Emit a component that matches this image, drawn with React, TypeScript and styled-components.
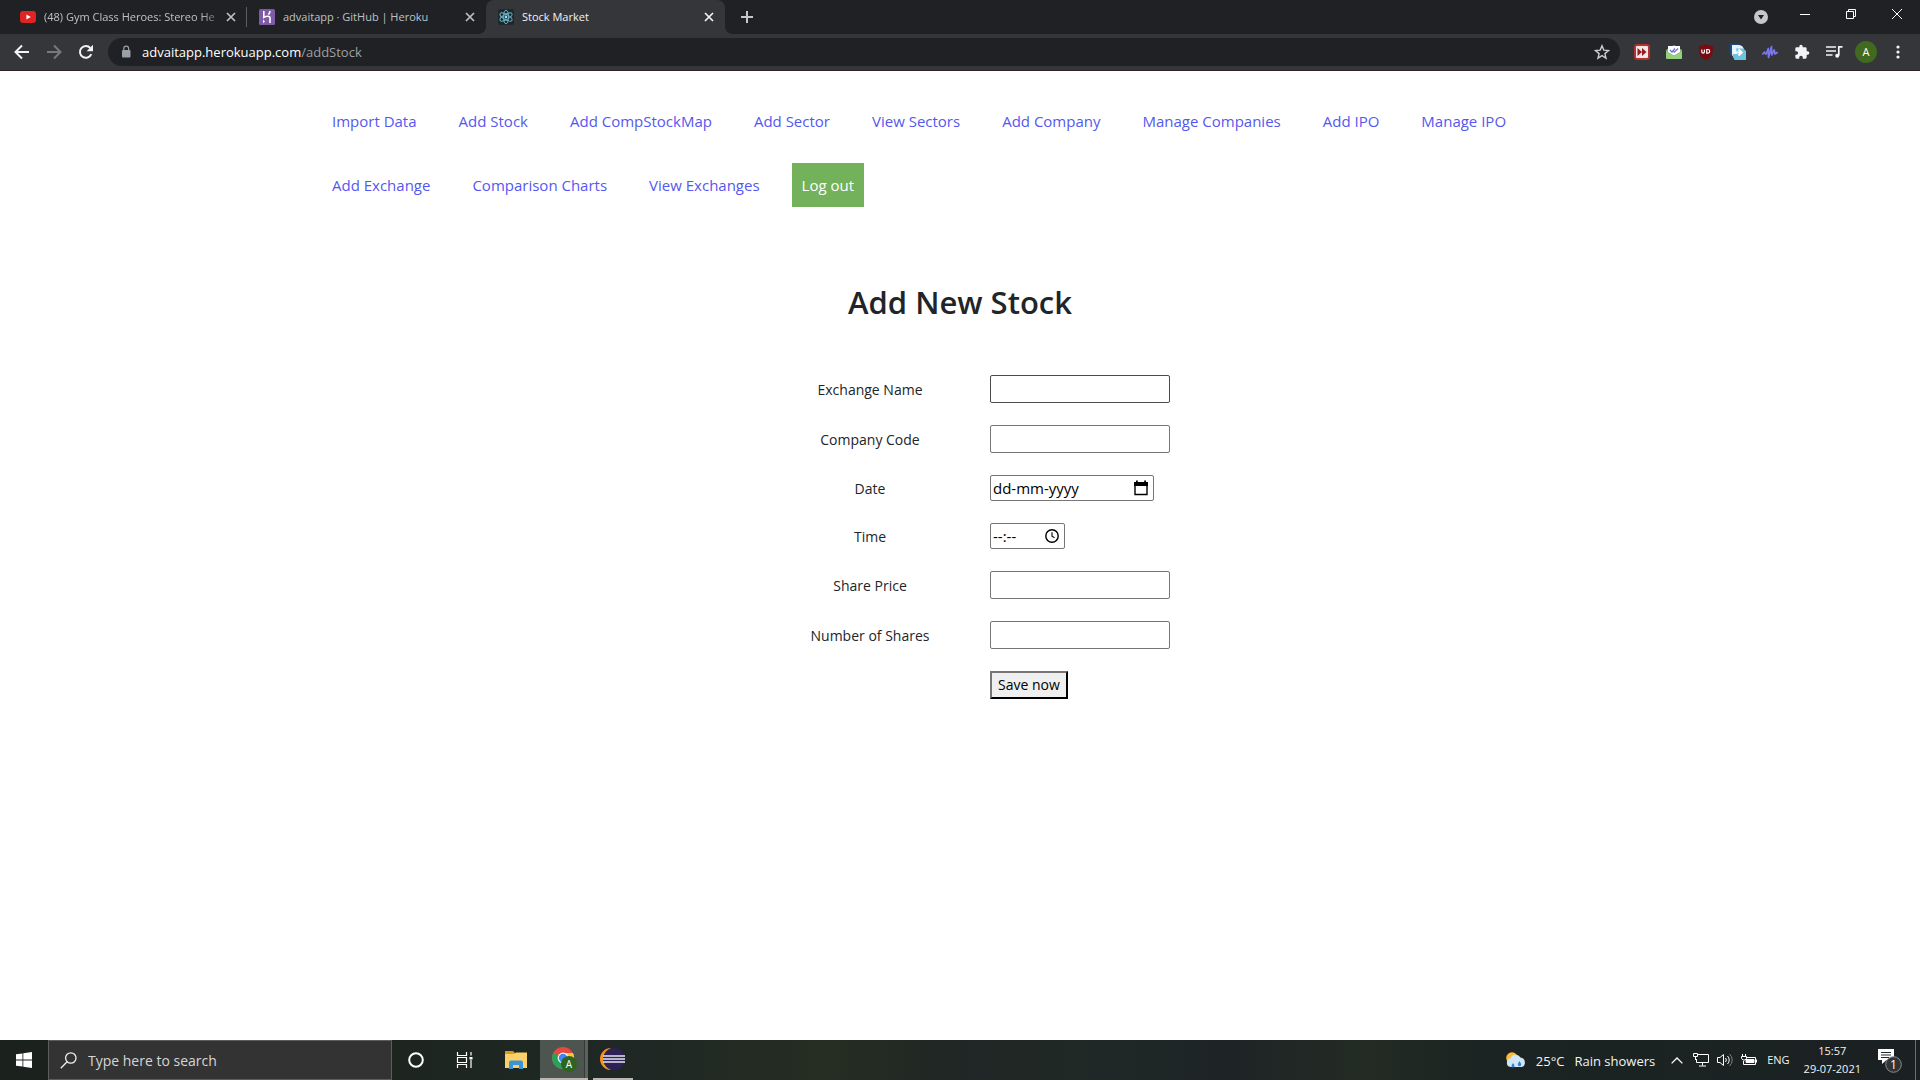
import React from 'react';
import styled, { createGlobalStyle, css } from 'styled-components';

const GlobalStyle = createGlobalStyle`
  *, *::before, *::after { box-sizing: border-box; }
  body { margin: 0; background: #fff; font-family: "Open Sans", "Noto Sans", sans-serif; }
  button, input { font: inherit; }
  a { text-decoration: none; }
`;

const Screen = styled.div`
  display: flex;
  flex-direction: column;
  min-height: 100vh;
`;

/* ---------- browser frame ---------- */

const BrowserFrame = styled.header`
  background: #202124;
  border-bottom: 1px solid #29222a;
`;

const TabStrip = styled.div`
  display: flex;
  align-items: stretch;
  height: 34px;
  padding-left: 8px;
`;

const Tab = styled.div<{ $active?: boolean; $divider?: boolean }>`
  display: flex;
  align-items: center;
  position: relative;
  flex: 0 1 239px;
  min-width: 0;
  height: 34px;
  padding: 0 7px 0 12px;
  color: ${(p) => (p.$active ? '#f1f3f4' : '#bdc1c6')};
  ${(p) =>
    p.$divider &&
    css`
      background: linear-gradient(#5b5d61, #5b5d61) right center / 1px 20px no-repeat;
    `}
  ${(p) =>
    p.$active &&
    css`
      background: #35363a;
      border-radius: 8px 8px 0 0;
      &::before,
      &::after {
        content: '';
        position: absolute;
        bottom: 0;
        width: 8px;
        height: 8px;
      }
      &::before {
        right: 100%;
        background: radial-gradient(circle at 0 0, #0000 8px, #35363a 8px);
      }
      &::after {
        left: 100%;
        background: radial-gradient(circle at 100% 0, #0000 8px, #35363a 8px);
      }
    `}
`;

const TabLabel = styled.button<{ $fade?: boolean }>`
  display: flex;
  align-items: center;
  gap: 8px;
  flex: 1;
  min-width: 0;
  padding: 0;
  border: 0;
  background: none;
  color: inherit;
  font-size: 11px;
  line-height: 16px;
  text-align: left;
  svg { flex: none; }
  span {
    flex: 1;
    overflow: hidden;
    white-space: nowrap;
    ${(p) => p.$fade && 'mask-image: linear-gradient(90deg, #000 88%, #0003);'}
  }
`;

const GlyphButton = styled.button<{ $w: number; $h: number; $color?: string }>`
  display: grid;
  place-items: center;
  flex: none;
  width: ${(p) => p.$w}px;
  height: ${(p) => p.$h}px;
  padding: 0;
  border: 0;
  background: none;
  color: ${(p) => p.$color || '#f1f3f4'};
`;

const WindowControls = styled.div`
  display: flex;
  align-items: flex-start;
  margin-left: auto;
`;

const Toolbar = styled.div`
  display: flex;
  align-items: center;
  height: 36px;
  padding: 0 6px;
  background: #35363a;
`;

const Omnibox = styled.form`
  display: flex;
  align-items: center;
  flex: 1;
  min-width: 0;
  height: 28px;
  margin: 0 6px;
  padding: 0 2px 0 11px;
  border-radius: 14px;
  background: #202124;
  font-size: 13px;
  line-height: 18px;
`;

const Host = styled.label`
  margin-left: 9px;
  color: #fff;
`;

const PathInput = styled.input`
  flex: 1;
  min-width: 0;
  padding: 0;
  border: 0;
  outline: 0;
  background: none;
  color: #9aa0a6;
`;

const Avatar = styled.span`
  display: grid;
  place-items: center;
  width: 22px;
  height: 22px;
  border-radius: 50%;
  background: #41691f;
  color: #fff;
  font-size: 11px;
  line-height: 16px;
`;

/* ---------- page ---------- */

const Page = styled.main`
  display: flex;
  flex: 1;
  flex-direction: column;
  align-items: center;
  background: #fff;
`;

const Nav = styled.nav`
  display: flex;
  flex-wrap: wrap;
  gap: 20px 22px;
  width: 100%;
  max-width: 1276px;
  margin-top: 28px;
`;

const NavLink = styled.a<{ $filled?: boolean }>`
  padding: 10px;
  background: ${(p) => (p.$filled ? '#73b15a' : 'transparent')};
  color: ${(p) => (p.$filled ? '#fff' : '#5558f0')};
  font-size: 15px;
  line-height: 24px;
`;

const Title = styled.h2`
  margin: 76px 0 54px;
  color: #212529;
  font-size: 31px;
  font-weight: 600;
  line-height: 38px;
`;

const StockForm = styled.form`
  display: grid;
  grid-template-columns: 240px 180px;
  row-gap: 22px;
  align-items: center;
  justify-items: start;
  color: #212529;
  font-size: 14px;
  line-height: 22px;
`;

const FieldLabel = styled.label`
  justify-self: center;
  padding-top: 2px;
`;

const fieldBox = css`
  border: 1px solid #767676;
  border-radius: 2px;
  background: #fff;
  color: #000;
`;

const TextField = styled.input<{ $hovered?: boolean }>`
  ${fieldBox}
  width: 100%;
  height: 28px;
  padding: 1px 2px;
  ${(p) => p.$hovered && 'border-color: #4c4c4c;'}
`;

const PickerBox = styled.div<{ $w: number }>`
  ${fieldBox}
  display: flex;
  align-items: center;
  width: ${(p) => p.$w}px;
  height: 26px;
  padding: 0 4px 0 2px;
  input {
    flex: 1;
    min-width: 0;
    padding: 0;
    border: 0;
    outline: 0;
    background: none;
    font-size: 15px;
  }
  input::placeholder { color: #000; opacity: 1; }
`;

const SaveButton = styled.button`
  grid-column: 2;
  height: 28px;
  padding: 0 6px;
  border: 2px outset #767676;
  border-color: #767676 #212121 #212121 #767676;
  background: #efefef;
  color: #000;
`;

/* ---------- taskbar ---------- */

const Taskbar = styled.footer`
  display: flex;
  align-items: stretch;
  height: 40px;
  background: linear-gradient(90deg, #1b211d 0%, #1f2824 34%, #262d22 43%, #202625 50%, #202926 56%, #1e2426 64%, #232b24 71%, #1b2422 77%, #1b2123 100%);
  color: #f3f3f3;
`;

const SearchBox = styled.label`
  display: flex;
  align-items: center;
  gap: 11px;
  width: 344px;
  padding: 0 11px;
  border: 1px solid #5d5d5d;
  background: #333;
  input {
    flex: 1;
    min-width: 0;
    padding: 2px 0 0;
    border: 0;
    outline: 0;
    background: none;
    color: #fff;
    font-size: 14px;
    line-height: 20px;
  }
  input::placeholder { color: #d6d6d6; opacity: 1; }
`;

const TaskItem = styled.button<{ $state?: 'active' | 'open'; $gap?: boolean }>`
  display: grid;
  place-items: center;
  width: 48px;
  margin-left: ${(p) => (p.$gap ? 4 : 0)}px;
  padding: 0;
  border: 0;
  background: none;
  color: #fff;
  ${(p) =>
    p.$state === 'active' &&
    css`
      background: linear-gradient(90deg, #4d5550 44px, #333b37 44px, #333b37 45px, #5b625e 45px);
      border-bottom: 2px solid #b9b6b3;
    `}
  ${(p) =>
    p.$state === 'open' &&
    css`
      width: 40px;
      margin-left: 5px;
      border-bottom: 2px solid #b9b6b3;
    `}
`;

const Tray = styled.div`
  display: flex;
  align-items: center;
  margin-left: auto;
`;

const Weather = styled.button`
  display: flex;
  align-items: center;
  gap: 10px;
  padding: 2px 0 0;
  margin-right: 10px;
  border: 0;
  background: none;
  color: inherit;
  font-size: 13px;
  line-height: 20px;
`;

const TrayText = styled.span`
  margin: 0 14px 0 6px;
  font-size: 11px;
  line-height: 18px;
`;

const Clock = styled.time`
  display: grid;
  justify-items: center;
  font-size: 11px;
  line-height: 18px;
`;

const Notifications = styled.button`
  display: grid;
  place-items: center;
  align-self: stretch;
  width: 55px;
  padding: 0 0 0 4px;
  border: 0;
  border-right: 1px solid #6b7170;
  margin-right: 4px;
  background: none;
  color: #fff;
`;

/* ---------- drawings ---------- */

const CloseGlyph = () => (
  <svg width="10" height="10" viewBox="0 0 10 10" stroke="currentColor" strokeWidth="1.7">
    <path d="M1 1l8 8M9 1l-8 8" />
  </svg>
);

const YouTubeIcon = () => (
  <svg width="16" height="16" viewBox="0 0 16 16">
    <rect y="2" width="16" height="12" rx="3" fill="#e02424" />
    <path d="M6.4 5.4v5.2L10.8 8z" fill="#fff" />
  </svg>
);

const HerokuIcon = () => (
  <svg width="16" height="16" viewBox="0 0 16 16">
    <rect width="16" height="16" rx="1.5" fill="#7d5ba6" />
    <g fill="none" stroke="#fff" strokeWidth="1.6">
      <path d="M4.8 2v6.4C7 7.2 11 6.4 11 9v5M11 2c0 1.5-.6 2.6-1.6 3.6" />
    </g>
    <path d="M4 10.5v3.8l2-1.9z" fill="#fff" />
  </svg>
);

const ReactIcon = () => (
  <svg width="16" height="16" viewBox="0 0 16 16">
    <rect width="16" height="16" rx="2" fill="#20272b" />
    <g fill="none" stroke="#68b5cc" strokeWidth=".9">
      <ellipse cx="8" cy="8" rx="6.8" ry="2.6" transform="rotate(30 8 8)" />
      <ellipse cx="8" cy="8" rx="6.8" ry="2.6" transform="rotate(90 8 8)" />
      <ellipse cx="8" cy="8" rx="6.8" ry="2.6" transform="rotate(150 8 8)" />
    </g>
    <circle cx="8" cy="8" r="1.4" fill="#9adcf0" />
  </svg>
);

const ArrowIcon = ({ flip }: { flip?: boolean }) => (
  <svg width="16" height="16" viewBox="0 0 16 16" fill="none" stroke="currentColor" strokeWidth="2">
    <path d={flip ? 'M1 8h13M8 1.5L14.5 8 8 14.5' : 'M15 8H2M8 1.5L1.5 8 8 14.5'} />
  </svg>
);

const ReloadIcon = () => (
  <svg width="16" height="16" viewBox="0 0 16 16">
    <path d="M13.3 10.2A5.9 5.9 0 1 1 12.3 4" fill="none" stroke="currentColor" strokeWidth="2" />
    <path d="M15 .8v6.4H8.6z" fill="currentColor" />
  </svg>
);

const LockIcon = () => (
  <svg width="14" height="14" viewBox="0 0 14 14" aria-hidden="true">
    <rect x="3" y="5" width="8.5" height="7.5" rx="1" fill="#9aa0a6" />
    <path d="M4.8 5.5V3.6a2.4 2.4 0 0 1 4.8 0v1.9" fill="none" stroke="#9aa0a6" strokeWidth="1.2" />
  </svg>
);

const StarIcon = () => (
  <svg width="16" height="16" viewBox="0 0 16 16" fill="none" stroke="#c9ccd0" strokeWidth="1.4">
    <path d="M8 1.8l1.8 4.3 4.7.4-3.6 3.1 1.1 4.6L8 11.700l-4 2.500 1.100-4.600L1.500 6.500l4.700-.4z" />
  </svg>
);

const FastForwardIcon = () => (
  <svg width="16" height="16" viewBox="0 0 16 16">
    <rect width="16" height="16" rx="3" fill="#b3312e" />
    <rect x="2" y="2" width="12" height="12" rx="1" fill="#f5e7e5" />
    <path d="M3.500 4v8L8 8zM8 4v8l4.500-4z" fill="#8d2020" />
  </svg>
);

const MailIcon = () => (
  <svg width="16" height="16" viewBox="0 0 16 16">
    <path d="M0 6l8-5 8 5v7.500A1.500 1.500 0 0 1 14.500 15h-13A1.500 1.500 0 0 1 0 13.500z" fill="#7fb96a" />
    <path d="M2 2h12v6L8 11.500 2 8z" fill="#fff" />
    <path d="M4 6l2 2L9 4.500M7.500 7.500l.8.700L12 4.500" fill="none" stroke="#6d6bd0" strokeWidth="1.200" />
    <path d="M0 7.500L8 12l8-4.500v6A1.500 1.500 0 0 1 14.500 15h-13A1.500 1.500 0 0 1 0 13.500z" fill="#95cf80" />
  </svg>
);

const ShieldIcon = () => (
  <svg width="16" height="16" viewBox="0 0 16 16">
    <path d="M8 0c2 1.400 4 1.800 6.800 1.900V8c0 3.700-3 6-6.800 8-3.800-2-6.800-4.300-6.800-8V1.900C4 1.800 6 1.400 8 0z" fill="#7a0b10" />
    <path d="M3.800 5.500v2.300a1.300 1.300 0 0 0 2.600 0V5.500M8.700 5.500v3.600h1.200a1.800 1.800 0 0 0 0-3.600z" fill="none" stroke="#fff" strokeWidth="1.200" />
  </svg>
);

const ShareDocIcon = () => (
  <svg width="16" height="16" viewBox="0 0 16 16">
    <path d="M0 0h9l3 3v9H3a3 3 0 0 1-3-3z" fill="#1e4d86" />
    <path d="M2 1h7a6 6 0 0 1 5 5v7H5a3 3 0 0 1-3-3z" fill="#e7f4fa" />
    <path d="M6 4.500h7.500L16 7v9H4.500L3 13V10h4z" fill="#6cc3e2" />
    <path d="M4 8.500h7M8.500 5.500l3.200 3-3.200 3" fill="none" stroke="#fff" strokeWidth="2" />
  </svg>
);

const WaveIcon = () => (
  <svg width="16" height="16" viewBox="0 0 16 16" fill="none" stroke="#7a76ee" strokeWidth="1.700" strokeLinecap="round" strokeLinejoin="round">
    <path d="M.8 10l1.700-1.800 1.500 2L6.300 4.500 6.500 13.500 9.500 2.500l.2 8.500 2.500-5 .8 4 2.200-1.500" />
  </svg>
);

const PuzzleIcon = () => (
  <svg width="16" height="16" viewBox="0 0 24 24" fill="currentColor">
    <path d="M20.500 11H19V7a2 2 0 0 0-2-2h-4V3.500a2.500 2.500 0 0 0-5 0V5H4a2 2 0 0 0-2 2v3.800h1.500a2.700 2.700 0 0 1 0 5.400H2V20a2 2 0 0 0 2 2h3.800v-1.500a2.700 2.700 0 0 1 5.400 0V22H17a2 2 0 0 0 2-2v-4h1.500a2.500 2.500 0 0 0 0-5z" />
  </svg>
);

const QueueMusicIcon = () => (
  <svg width="17" height="16" viewBox="0 0 17 16" fill="none" stroke="currentColor" strokeWidth="1.700">
    <path d="M0 3h10M0 7h10M0 11h6.500M12.800 11.500V2.800H16.500" />
    <circle cx="11.200" cy="11.800" r="2" fill="currentColor" stroke="none" />
  </svg>
);

const MenuDots = () => (
  <svg width="4" height="14" viewBox="0 0 4 14" fill="currentColor">
    <circle cx="2" cy="2" r="1.600" />
    <circle cx="2" cy="7" r="1.600" />
    <circle cx="2" cy="12" r="1.600" />
  </svg>
);

const CalendarIcon = () => (
  <svg width="14" height="16" viewBox="0 0 14 16">
    <path d="M1 3h12v11.500H1z" fill="none" stroke="#000" strokeWidth="1.400" />
    <path d="M0 2h14v4H0zM2 .5h1.800V3H2zM10.200.5H12V3h-1.800z" fill="#000" />
  </svg>
);

const ClockIcon = () => (
  <svg width="14" height="14" viewBox="0 0 14 14" fill="none" stroke="#000" strokeWidth="1.400">
    <circle cx="7" cy="7" r="6.200" />
    <path d="M7 3.200v4l2.600 1.700" strokeWidth="1.100" />
  </svg>
);

const WindowsLogo = () => (
  <svg width="16" height="16" viewBox="0 0 16 16" fill="#fff">
    <path d="M0 2.300l6.500-.9v6.200H0zM7.300 1.300L16 0v7.600H7.300zM0 8.400h6.500v6.200L0 13.700zM7.300 8.400H16V16l-8.700-1.300z" />
  </svg>
);

const SearchIcon = () => (
  <svg width="17" height="17" viewBox="0 0 17 17" fill="none" stroke="#f0f0f0" strokeWidth="1.300">
    <circle cx="10.800" cy="6" r="5.200" />
    <path d="M7.100 9.700L.8 16.200" />
  </svg>
);

const CortanaIcon = () => (
  <svg width="16" height="16" viewBox="0 0 16 16">
    <circle cx="8" cy="8" r="6.800" fill="none" stroke="#fff" strokeWidth="2" />
  </svg>
);

const TaskViewIcon = () => (
  <svg width="17" height="16" viewBox="0 0 17 16" fill="none" stroke="#fff" strokeWidth="1.200">
    <path d="M1.500 0v3.500h9V0M1.500 16v-3.500h9V16M1.500 5.500h9v5h-9zM15 0v3.500M15 8v8" />
    <path d="M13.500 5h3v2.500h-3z" fill="#fff" stroke="none" />
  </svg>
);

const FolderIcon = () => (
  <svg width="22" height="18" viewBox="0 0 22 18">
    <path d="M0 0h8l2 2v3H0z" fill="#dc9a16" />
    <path d="M0 3h9l2-1.500h11V17H0z" fill="#fcd068" />
    <path d="M4 18v-6.500a2 2 0 0 1 2-2h10a2 2 0 0 1 2 2V18h-4v-4H8v4z" fill="#3b93d8" />
  </svg>
);

const ChromeIcon = () => (
  <svg width="26" height="26" viewBox="0 0 26 26">
    <circle cx="12" cy="12" r="11" fill="#e8483d" />
    <path d="M12 12L2.500 6.500A11 11 0 0 0 12 23l4-7z" fill="#25a35a" />
    <path d="M12 7h10A11 11 0 0 1 12 23l5-8z" fill="#fdc83a" />
    <circle cx="12" cy="12" r="5.400" fill="#f4f4f4" />
    <circle cx="12" cy="12" r="4.200" fill="#4285f4" />
    <circle cx="18" cy="18" r="8" fill="#2f6420" />
    <text x="18" y="22" fill="#fff" fontSize="10" textAnchor="middle">A</text>
  </svg>
);

const EclipseIcon = () => (
  <svg width="26" height="24" viewBox="0 0 26 24">
    <path d="M11 1a11 11 0 0 0 0 22A14 14 0 0 1 11 1z" fill="#f29422" />
    <circle cx="14" cy="12" r="11" fill="#2c2255" />
    <path d="M3 9h22M3 12h22M3 15h22" stroke="#e8e6f0" strokeWidth="1.700" />
  </svg>
);

const WeatherIcon = () => (
  <svg width="20" height="18" viewBox="0 0 20 18">
    <circle cx="6" cy="6" r="5.800" fill="#f8bd3c" />
    <path d="M4.500 15a4.300 4.300 0 0 1 0-8.500 5.500 5.500 0 0 1 10-1A5 5 0 0 1 16 15z" fill="#cfe5f8" />
    <path d="M7 11c1 1.500 1.500 2.200 1.500 3a1.500 1.500 0 0 1-3 0c0-.8.500-1.500 1.500-3zM13.500 9c1.200 1.800 1.700 2.800 1.700 3.600a1.700 1.700 0 0 1-3.400 0c0-.8.500-1.800 1.700-3.600z" fill="#2f82d0" />
  </svg>
);

const ChevronUp = () => (
  <svg width="12" height="7" viewBox="0 0 12 7" fill="none" stroke="#fff" strokeWidth="1.300">
    <path d="M.6 6.400L6 1l5.400 5.400" />
  </svg>
);

const NetworkIcon = () => (
  <svg width="16" height="14" viewBox="0 0 16 14" fill="none" stroke="#fff">
    <path d="M5 1.500h10.500v8H3.500V6M9.500 9.500v3M6 13h7M.5.500h4v3h-4zM2.500 3.500V7" />
  </svg>
);

const SpeakerIcon = () => (
  <svg width="16" height="14" viewBox="0 0 16 14" fill="none" stroke="#fff">
    <path d="M.5 4.500H3L6.500 1.500v11L3 9.500H.5zM8.500 5a3 3 0 0 1 0 4M10.500 3a5.500 5.500 0 0 1 0 8" />
    <path d="M12.500 1a8 8 0 0 1 0 12" stroke="#7c8381" />
  </svg>
);

const BatteryIcon = () => (
  <svg width="16" height="12" viewBox="0 0 16 12" fill="none" stroke="#fff">
    <path d="M5 3.500h9.500v7h-12V7M15.500 5.500v3M1.500 0v2M4.500 0v2M.5 2.500h5v2L4 6H2L.5 4.500z" />
    <path d="M5 5.500h8v3H5z" fill="#fff" />
  </svg>
);

const NotificationIcon = () => (
  <svg width="26" height="26" viewBox="0 0 26 26">
    <path d="M1 2h16v11H9.500L5 17v-4H1z" fill="#fff" />
    <path d="M4 5.500h10M4 8h10M4 10.500h8" stroke="#262b2b" />
    <circle cx="16.500" cy="17.500" r="7.800" fill="#303435" stroke="#888d8d" />
    <text x="16.500" y="22" fill="#fff" fontSize="12" textAnchor="middle">1</text>
  </svg>
);

/* ---------- content ---------- */

const links = [
  'Import Data', 'Add Stock', 'Add CompStockMap', 'Add Sector', 'View Sectors', 'Add Company',
  'Manage Companies', 'Add IPO', 'Manage IPO', 'Add Exchange', 'Comparison Charts', 'View Exchanges',
];

const tabs = [
  { title: '(48) Gym Class Heroes: Stereo He', icon: <YouTubeIcon />, divider: true, fade: true },
  { title: 'advaitapp · GitHub | Heroku', icon: <HerokuIcon /> },
  { title: 'Stock Market', icon: <ReactIcon />, active: true },
];

const extensions = [
  { name: 'Fast forward', icon: <FastForwardIcon /> },
  { name: 'Mail tracker', icon: <MailIcon /> },
  { name: 'Blocker', icon: <ShieldIcon /> },
  { name: 'Share page', icon: <ShareDocIcon /> },
  { name: 'Voice', icon: <WaveIcon /> },
  { name: 'Extensions', icon: <PuzzleIcon /> },
  { name: 'Media controls', icon: <QueueMusicIcon /> },
  { name: 'Profile', icon: <Avatar>A</Avatar> },
  { name: 'Menu', icon: <MenuDots /> },
];

const Browser = () => (
  <BrowserFrame>
    <TabStrip>
      {tabs.map((t) => (
        <Tab key={t.title} $active={t.active} $divider={t.divider}>
          <TabLabel $fade={t.fade}>
            {t.icon}
            <span>{t.title}</span>
          </TabLabel>
          <GlyphButton $w={18} $h={16} $color="inherit" aria-label="Close tab"><CloseGlyph /></GlyphButton>
        </Tab>
      ))}
      <GlyphButton $w={44} $h={34} $color="#c4c7cb" aria-label="New tab">
        <svg width="12" height="12" viewBox="0 0 12 12" stroke="currentColor" strokeWidth="2"><path d="M0 6h12M6 0v12" /></svg>
      </GlyphButton>
      <WindowControls>
        <GlyphButton $w={42} $h={34} aria-label="Search tabs">
          <svg width="14" height="14" viewBox="0 0 14 14"><circle cx="7" cy="7" r="7" fill="#c4c7cb" /><path d="M4 5h6l-3 4.500z" fill="#202124" /></svg>
        </GlyphButton>
        <GlyphButton $w={46} $h={28} aria-label="Minimise">
          <svg width="10" height="10" viewBox="0 0 10 10"><path d="M0 5.500h10" stroke="#fff" /></svg>
        </GlyphButton>
        <GlyphButton $w={46} $h={28} aria-label="Restore">
          <svg width="10" height="10" viewBox="0 0 10 10" fill="none" stroke="#fff"><path d="M.5 2.500h7v7h-7zM2.500 2.500v-2h7v7h-2" /></svg>
        </GlyphButton>
        <GlyphButton $w={46} $h={28} aria-label="Close window">
          <svg width="10" height="10" viewBox="0 0 10 10" stroke="#fff"><path d="M0 0l10 10M10 0L0 10" /></svg>
        </GlyphButton>
      </WindowControls>
    </TabStrip>
    <Toolbar>
      <GlyphButton $w={32} $h={32} aria-label="Back"><ArrowIcon /></GlyphButton>
      <GlyphButton $w={32} $h={32} $color="#77797d" aria-label="Forward"><ArrowIcon flip /></GlyphButton>
      <GlyphButton $w={32} $h={32} aria-label="Reload"><ReloadIcon /></GlyphButton>
      <Omnibox>
        <LockIcon />
        <Host htmlFor="address">advaitapp.herokuapp.com</Host>
        <PathInput id="address" defaultValue="/addStock" />
        <GlyphButton type="button" $w={32} $h={28} aria-label="Bookmark"><StarIcon /></GlyphButton>
      </Omnibox>
      {extensions.map((e) => (
        <GlyphButton key={e.name} $w={32} $h={32} aria-label={e.name}>{e.icon}</GlyphButton>
      ))}
    </Toolbar>
  </BrowserFrame>
);

const AddStock = () => (
  <Page>
    <Nav>
      {links.map((l) => <NavLink key={l} href="#">{l}</NavLink>)}
      <NavLink href="#" $filled>Log out</NavLink>
    </Nav>
    <Title>Add New Stock</Title>
    <StockForm>
      <FieldLabel htmlFor="exchange">Exchange Name</FieldLabel>
      <TextField id="exchange" $hovered />
      <FieldLabel htmlFor="company">Company Code</FieldLabel>
      <TextField id="company" />
      <FieldLabel htmlFor="date">Date</FieldLabel>
      <PickerBox $w={164}>
        <input id="date" placeholder="dd-mm-yyyy" />
        <GlyphButton type="button" $w={16} $h={20} aria-label="Pick a date"><CalendarIcon /></GlyphButton>
      </PickerBox>
      <FieldLabel htmlFor="time">Time</FieldLabel>
      <PickerBox $w={75}>
        <input id="time" placeholder="--:--" />
        <GlyphButton type="button" $w={16} $h={20} aria-label="Pick a time"><ClockIcon /></GlyphButton>
      </PickerBox>
      <FieldLabel htmlFor="price">Share Price</FieldLabel>
      <TextField id="price" />
      <FieldLabel htmlFor="shares">Number of Shares</FieldLabel>
      <TextField id="shares" />
      <SaveButton type="button">Save now</SaveButton>
    </StockForm>
  </Page>
);

const SystemTaskbar = () => (
  <Taskbar>
    <TaskItem aria-label="Start"><WindowsLogo /></TaskItem>
    <SearchBox>
      <SearchIcon />
      <input placeholder="Type here to search" aria-label="Search" />
    </SearchBox>
    <TaskItem aria-label="Cortana"><CortanaIcon /></TaskItem>
    <TaskItem aria-label="Task view"><TaskViewIcon /></TaskItem>
    <TaskItem $gap aria-label="File Explorer"><FolderIcon /></TaskItem>
    <TaskItem $state="active" aria-label="Chrome"><ChromeIcon /></TaskItem>
    <TaskItem $state="open" aria-label="Eclipse"><EclipseIcon /></TaskItem>
    <Tray>
      <Weather>
        <WeatherIcon />
        <span>25°C</span>
        <span>Rain showers</span>
      </Weather>
      <GlyphButton $w={24} $h={40} aria-label="Hidden icons"><ChevronUp /></GlyphButton>
      <GlyphButton $w={24} $h={40} aria-label="Network"><NetworkIcon /></GlyphButton>
      <GlyphButton $w={24} $h={40} aria-label="Volume"><SpeakerIcon /></GlyphButton>
      <GlyphButton $w={24} $h={40} aria-label="Battery"><BatteryIcon /></GlyphButton>
      <TrayText>ENG</TrayText>
      <Clock dateTime="2021-07-29T15:57">
        <span>15:57</span>
        <span>29-07-2021</span>
      </Clock>
      <Notifications aria-label="Notifications"><NotificationIcon /></Notifications>
    </Tray>
  </Taskbar>
);

export default function App() {
  return (
    <Screen>
      <GlobalStyle />
      <Browser />
      <AddStock />
      <SystemTaskbar />
    </Screen>
  );
}
